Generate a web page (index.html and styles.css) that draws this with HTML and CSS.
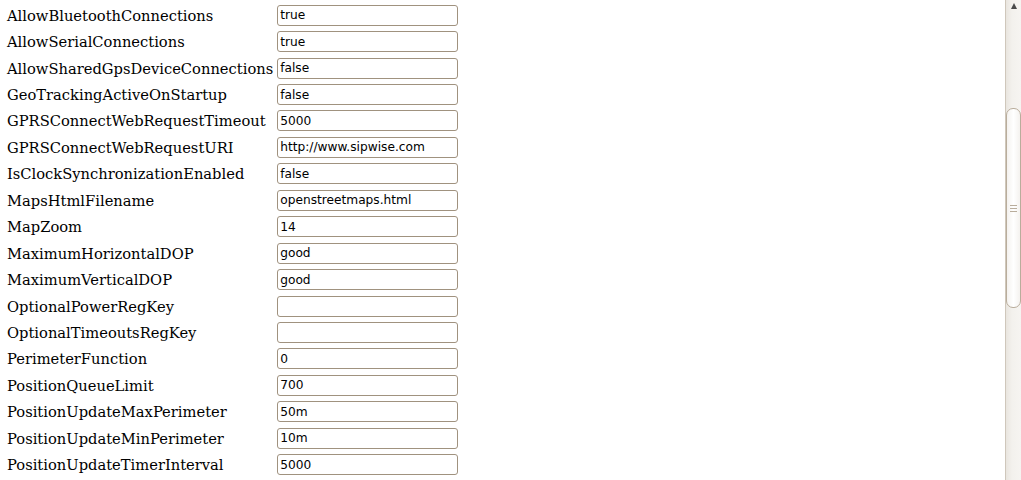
FILE: index.html
```html
<!DOCTYPE html>
<html lang="en">
<head>
  <meta charset="UTF-8" />
  <title>Settings</title>
  <link rel="stylesheet" href="styles.css">
</head>
<body>
  <div class="page">
    <div class="content">
      <table class="settings">
        <tbody>
          <tr><td>AllowBluetoothConnections</td><td><input type="text" value="true" /></td></tr>
          <tr><td>AllowSerialConnections</td><td><input type="text" value="true" /></td></tr>
          <tr><td>AllowSharedGpsDeviceConnections</td><td><input type="text" value="false" /></td></tr>
          <tr><td>GeoTrackingActiveOnStartup</td><td><input type="text" value="false" /></td></tr>
          <tr><td>GPRSConnectWebRequestTimeout</td><td><input type="text" value="5000" /></td></tr>
          <tr><td>GPRSConnectWebRequestURI</td><td><input type="text" value="http://www.sipwise.com" /></td></tr>
          <tr><td>IsClockSynchronizationEnabled</td><td><input type="text" value="false" /></td></tr>
          <tr><td>MapsHtmlFilename</td><td><input type="text" value="openstreetmaps.html" /></td></tr>
          <tr><td>MapZoom</td><td><input type="text" value="14" /></td></tr>
          <tr><td>MaximumHorizontalDOP</td><td><input type="text" value="good" /></td></tr>
          <tr><td>MaximumVerticalDOP</td><td><input type="text" value="good" /></td></tr>
          <tr><td>OptionalPowerRegKey</td><td><input type="text" value="" /></td></tr>
          <tr><td>OptionalTimeoutsRegKey</td><td><input type="text" value="" /></td></tr>
          <tr><td>PerimeterFunction</td><td><input type="text" value="0" /></td></tr>
          <tr><td>PositionQueueLimit</td><td><input type="text" value="700" /></td></tr>
          <tr><td>PositionUpdateMaxPerimeter</td><td><input type="text" value="50m" /></td></tr>
          <tr><td>PositionUpdateMinPerimeter</td><td><input type="text" value="10m" /></td></tr>
          <tr><td>PositionUpdateTimerInterval</td><td><input type="text" value="5000" /></td></tr>
        </tbody>
      </table>
    </div>

    <div class="scrollbar">
      <div class="arrow"></div>
      <div class="thumb">
        <div class="grip"></div>
      </div>
    </div>
  </div>
</body>
</html>
```

FILE: styles.css
```css
html, body {
  margin: 0;
  padding: 0;
  background: #ffffff;
  overflow: hidden;
}

.page {
  display: flex;
  height: 480px;
}

.content {
  flex: 1;
  padding: 1px 0 0 4px;
}

.settings {
  border-spacing: 2px;
  font-family: "DejaVu Serif", serif;
  font-size: 14.7px;
  color: #000;
}

.settings tr {
  height: 24.45px;
}

.settings td {
  padding: 1px;
  white-space: nowrap;
}

.settings input {
  box-sizing: border-box;
  width: 181px;
  height: 21px;
  margin: 0;
  padding: 1px 2px;
  border: 1px solid #a0927f;
  border-radius: 3px;
  font-family: "DejaVu Sans", sans-serif;
  font-size: 12.2px;
  color: #000;
  background: #fff;
}

.scrollbar {
  width: 15px;
  border-left: 1px solid #cfc7bb;
  background: linear-gradient(to right, #e9e5df, #f3f1ed 40%, #f6f4f1);
  display: flex;
  flex-direction: column;
  align-items: center;
}

.arrow {
  margin-top: 3px;
  width: 0;
  height: 0;
  border-left: 3px solid transparent;
  border-right: 3px solid transparent;
  border-bottom: 6px solid #4a4a4a;
}

.thumb {
  margin-top: 99px;
  box-sizing: border-box;
  width: 15px;
  height: 200px;
  border: 1px solid #b9ad9c;
  border-radius: 7px;
  background: linear-gradient(to right, #f4f2ef, #ffffff 50%, #f4f2ef);
  display: flex;
  align-items: center;
  justify-content: center;
}

.grip {
  width: 7px;
  height: 5px;
  border-top: 1px solid #b9ad9c;
  border-bottom: 1px solid #b9ad9c;
  background: linear-gradient(#b9ad9c, #b9ad9c) center / 100% 1px no-repeat;
}
```
